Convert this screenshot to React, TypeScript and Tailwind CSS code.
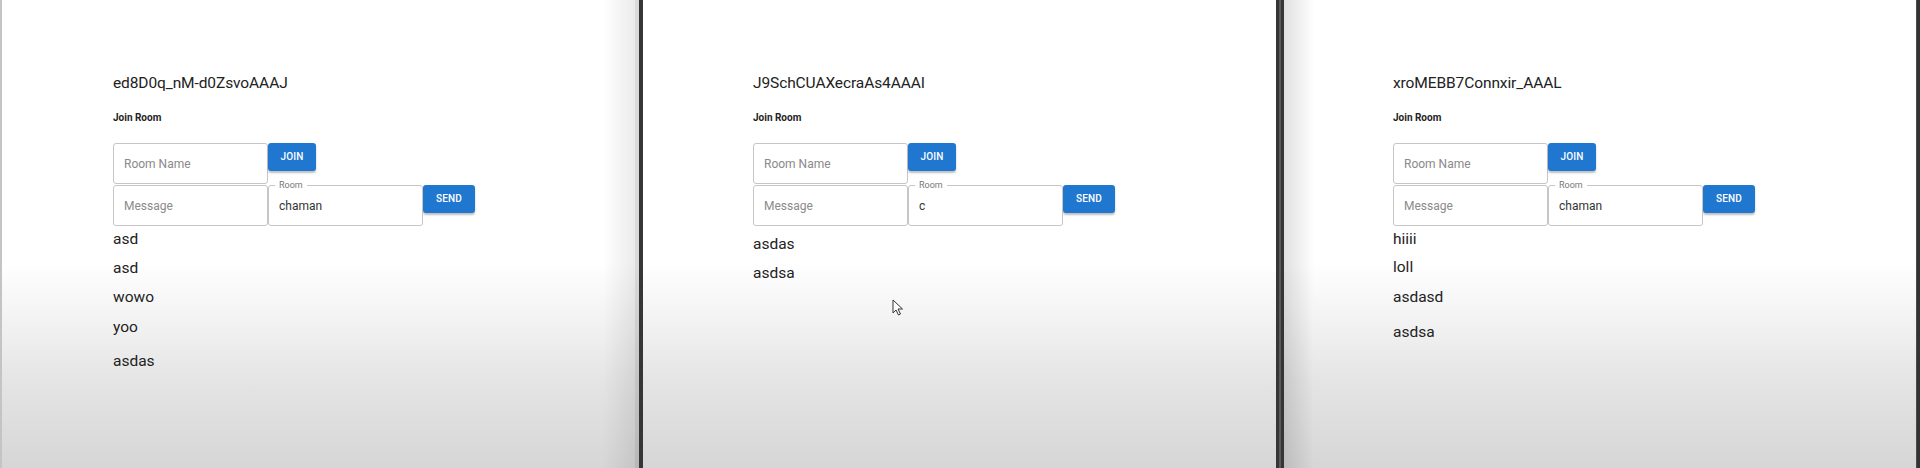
import React from "react";

type PanelProps = {
  id: string;
  room: string;
  messages: { text: string; mt: number }[];
  pl: string;
  width: string;
  leftShadow?: boolean;
  rightShadow?: boolean;
  leftEdge?: boolean;
  cursor?: boolean;
};

function Panel({ id, room, messages, pl, width, leftShadow, rightShadow, leftEdge, cursor }: PanelProps) {
  return (
    <div
      className={`relative h-full shrink-0 overflow-hidden bg-[linear-gradient(to_bottom,#ffffff_0%,#ffffff_56%,#f3f3f3_68%,#e4e4e4_82%,#d6d6d6_100%)] ${width}`}
    >
      {leftEdge && <div className="absolute left-0 top-0 bottom-0 w-[2px] bg-[#c4c4c4]" />}
      {leftShadow && (
        <div className="absolute left-0 top-0 bottom-0 w-[30px] bg-[linear-gradient(to_right,rgba(0,0,0,0.12),rgba(0,0,0,0))]" />
      )}
      {rightShadow && (
        <>
          <div className="absolute right-[4px] top-0 bottom-0 w-[32px] bg-[linear-gradient(to_left,rgba(0,0,0,0.08),rgba(0,0,0,0))]" />
          <div className="absolute right-0 top-0 bottom-0 w-[4px] bg-[rgba(0,0,0,0.14)]" />
        </>
      )}
      <div className={`relative flex flex-col pt-[71px] font-['Roboto',sans-serif] ${pl}`}>
        <div className="h-6 text-[15.5px] leading-6 tracking-[-0.1px] text-[#222222]">{id}</div>
        <div className="mt-[15px] h-4 text-[10px] font-bold leading-4 text-[#222222]">Join Room</div>
        <div className="mt-[17px] flex items-start">
          <div className="flex h-[41px] w-[155px] items-center rounded-[3px] border border-[#c6c6c6] bg-white pl-[10px] text-[12px] text-[#8a8a8a]">
            Room Name
          </div>
          <div className="flex h-[28px] w-[48px] items-center justify-center rounded-[3px] bg-[#1f77d0] pb-[2px] text-[10px] font-medium tracking-[0.2px] text-white shadow-[0_2px_2px_rgba(0,0,0,0.25)]">
            JOIN
          </div>
        </div>
        <div className="mt-[1px] flex items-start">
          <div className="flex h-[41px] w-[155px] items-center rounded-[3px] border border-[#c6c6c6] bg-white pl-[10px] text-[12px] text-[#8a8a8a]">
            Message
          </div>
          <div className="relative flex h-[41px] w-[155px] items-center rounded-[3px] border border-[#c6c6c6] bg-white pl-[10px] text-[12px] text-[#333333]">
            <span className="absolute left-[6px] top-[-7px] bg-white px-[4px] text-[9px] leading-[12px] text-[#777777]">Room</span>
            {room}
          </div>
          <div className="flex h-[28px] w-[52px] items-center justify-center rounded-[3px] bg-[#1f77d0] pb-[2px] text-[10px] font-medium tracking-[0.2px] text-white shadow-[0_2px_2px_rgba(0,0,0,0.25)]">
            SEND
          </div>
        </div>
        {messages.map((m, i) => (
          <div key={i} className="h-6 text-[15.5px] leading-6 text-[#222222]" style={{ marginTop: m.mt }}>
            {m.text}
          </div>
        ))}
      </div>
      {cursor && (
        <svg className="absolute left-[249px] top-[299px]" width="12" height="17" viewBox="0 0 12 17">
          <path d="M1 1 L1 14 L4 11 L6.5 16 L8.5 15 L6 10 L10.5 10 Z" fill="#ffffff" stroke="#333333" strokeWidth="1" strokeLinejoin="round" />
        </svg>
      )}
    </div>
  );
}

export default function App() {
  return (
    <div className="flex h-[468px] w-[1920px] overflow-hidden bg-white">
      <Panel
        id="ed8D0q_nM-d0ZsvoAAAJ"
        room="chaman"
        width="w-[639px]"
        pl="pl-[113px]"
        leftEdge
        rightShadow
        messages={[
          { text: "asd", mt: 1 },
          { text: "asd", mt: 5 },
          { text: "wowo", mt: 5 },
          { text: "yoo", mt: 6 },
          { text: "asdas", mt: 10 },
        ]}
      />
      <div className="h-full w-[4px] shrink-0 bg-[#363636]" />
      <Panel
        id="J9SchCUAXecraAs4AAAI"
        room="c"
        width="w-[633px]"
        pl="pl-[110px]"
        cursor
        messages={[
          { text: "asdas", mt: 6 },
          { text: "asdsa", mt: 5 },
        ]}
      />
      <div className="flex h-full w-[8px] shrink-0">
        <div className="h-full w-[3px] bg-[#363636]" />
        <div className="h-full w-[2px] bg-[#5a5a5a]" />
        <div className="h-full w-[3px] bg-[#363636]" />
      </div>
      <Panel
        id="xroMEBB7Connxir_AAAL"
        room="chaman"
        width="w-[632px]"
        pl="pl-[109px]"
        leftShadow
        messages={[
          { text: "hiiii", mt: 1 },
          { text: "loll", mt: 4 },
          { text: "asdasd", mt: 6 },
          { text: "asdsa", mt: 11 },
        ]}
      />
      <div className="flex h-full w-[4px] shrink-0">
        <div className="h-full w-[1px] bg-[#4a4a4a]" />
        <div className="h-full w-[3px] bg-[#333333]" />
      </div>
    </div>
  );
}
